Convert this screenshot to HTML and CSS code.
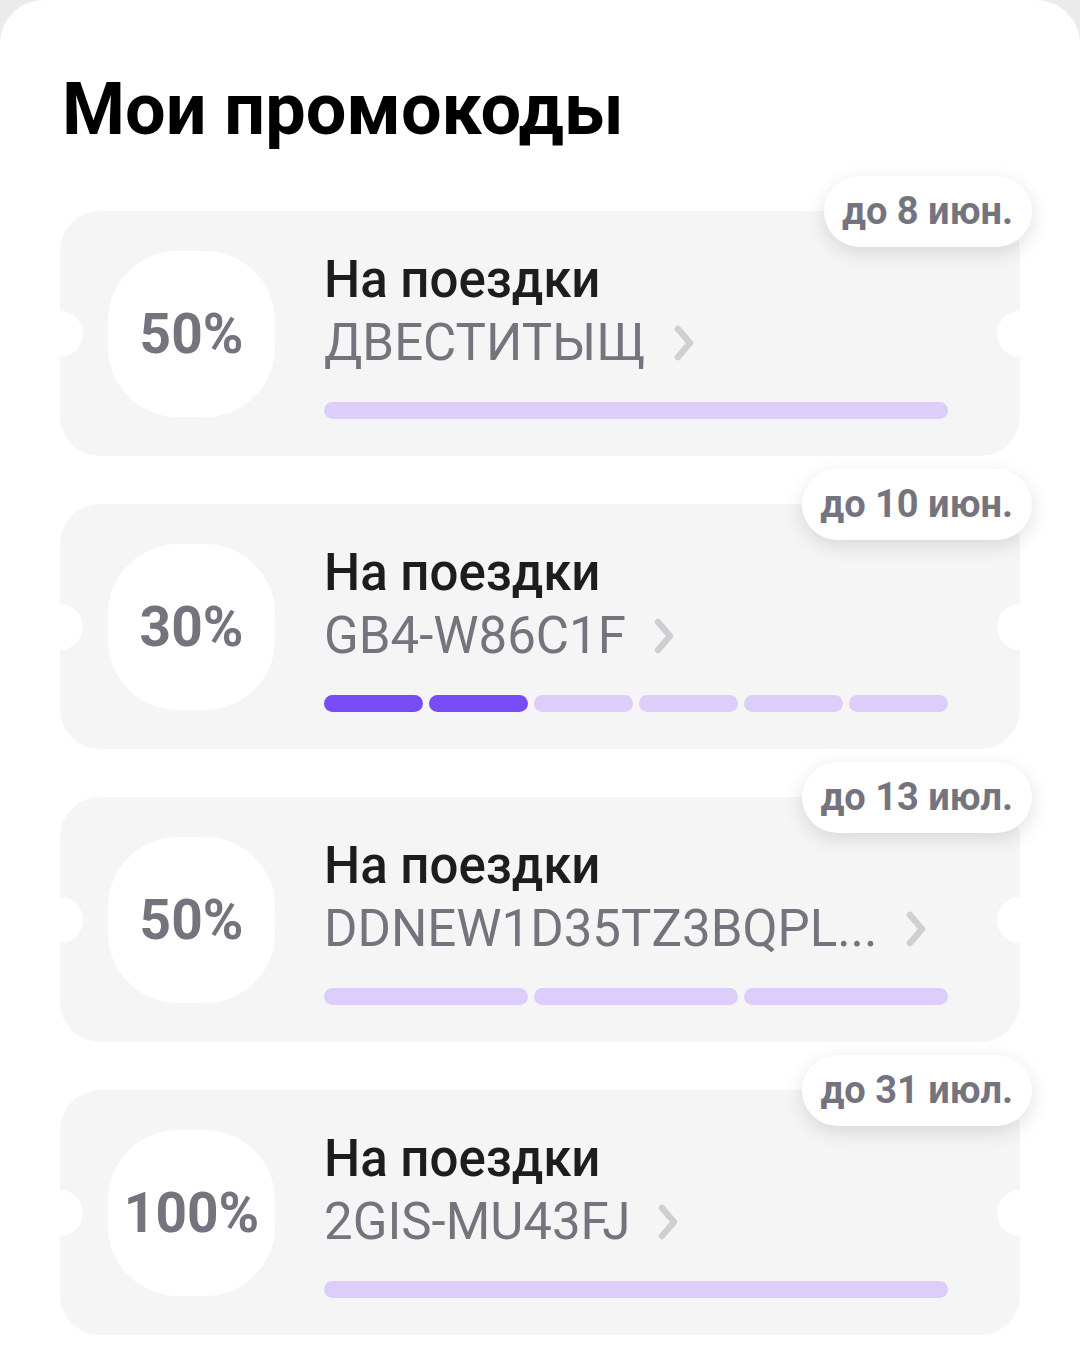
FILE: index.html
```html
<!DOCTYPE html>
<html lang="ru">

<head>
    <meta charset="UTF-8" />
    <meta name="viewport" content="width=device-width, initial-scale=1" />
    <title>Мои промокоды</title>
    <link rel="stylesheet" href="styles.css">
</head>

<body>
    <div class="sheet">
        <h1 class="sheet-title">Мои промокоды</h1>

        <div class="promo-list">

            <div class="promo">
                <span class="promo-date">до 8 июн.</span>
                <div class="promo-discount">50%</div>
                <div class="promo-info">
                    <div class="promo-title">На поездки</div>
                    <div class="promo-code">
                        <span class="promo-code-text">ДВЕСТИТЫЩ</span>
                        <svg class="chevron" viewBox="0 0 20 36"><path d="M4 4 L16 18 L4 32" /></svg>
                    </div>
                    <div class="progress">
                        <span class="seg"></span>
                    </div>
                </div>
            </div>

            <div class="promo">
                <span class="promo-date">до 10 июн.</span>
                <div class="promo-discount">30%</div>
                <div class="promo-info">
                    <div class="promo-title">На поездки</div>
                    <div class="promo-code">
                        <span class="promo-code-text">GB4-W86C1F</span>
                        <svg class="chevron" viewBox="0 0 20 36"><path d="M4 4 L16 18 L4 32" /></svg>
                    </div>
                    <div class="progress">
                        <span class="seg done"></span>
                        <span class="seg done"></span>
                        <span class="seg"></span>
                        <span class="seg"></span>
                        <span class="seg"></span>
                        <span class="seg"></span>
                    </div>
                </div>
            </div>

            <div class="promo">
                <span class="promo-date">до 13 июл.</span>
                <div class="promo-discount">50%</div>
                <div class="promo-info">
                    <div class="promo-title">На поездки</div>
                    <div class="promo-code">
                        <span class="promo-code-text">DDNEW1D35TZ3BQPL...</span>
                        <svg class="chevron" viewBox="0 0 20 36"><path d="M4 4 L16 18 L4 32" /></svg>
                    </div>
                    <div class="progress">
                        <span class="seg"></span>
                        <span class="seg"></span>
                        <span class="seg"></span>
                    </div>
                </div>
            </div>

            <div class="promo">
                <span class="promo-date">до 31 июл.</span>
                <div class="promo-discount">100%</div>
                <div class="promo-info">
                    <div class="promo-title">На поездки</div>
                    <div class="promo-code">
                        <span class="promo-code-text">2GIS-MU43FJ</span>
                        <svg class="chevron" viewBox="0 0 20 36"><path d="M4 4 L16 18 L4 32" /></svg>
                    </div>
                    <div class="progress">
                        <span class="seg"></span>
                    </div>
                </div>
            </div>

        </div>
    </div>
</body>

</html>
```

FILE: styles.css
```css
:root {
    /* Surfaces */
    --page-bg: #ebebeb;
    --sheet-bg: #ffffff;
    --card-bg: #f5f5f5;

    /* Text */
    --text-main: #000000;
    --text-title: #1d1d1f;
    --text-muted: #75747e;
    --chevron: #cfcfd3;

    /* Progress */
    --seg-idle: #dccdfb;
    --seg-done: #784cf5;
}

body {
    margin: 0;
    background: var(--page-bg);
    font-family: Roboto, "Noto Sans", sans-serif;
}

.sheet {
    min-height: 100vh;
    box-sizing: border-box;
    padding: 74px 60px 0;
    background: var(--sheet-bg);
    border-radius: 44px 44px 0 0;
}

.sheet-title {
    margin: 0 0 65px 2px;
    font-size: 72px;
    line-height: 1;
    font-weight: 700;
    color: var(--text-main);
}

.promo-list {
    display: flex;
    flex-direction: column;
    gap: 48px;
}

/* ——— ticket card ——— */
.promo {
    position: relative;
    display: flex;
    align-items: center;
    padding: 37px 72px 37px 48px;
    background: var(--card-bg);
    border-radius: 40px;
}

/* side notches */
.promo::before,
.promo::after {
    content: '';
    position: absolute;
    top: calc(50% - 23px);
    width: 46px;
    height: 46px;
    border-radius: 50%;
    background: var(--sheet-bg);
}

.promo::before {
    left: -23px;
}

.promo::after {
    right: -23px;
}

.promo-date {
    position: absolute;
    top: -35px;
    right: -12px;
    z-index: 1;
    height: 71px;
    padding: 0 19px 0 18px;
    line-height: 71px;
    font-size: 38px;
    font-weight: 700;
    color: var(--text-muted);
    background: #fff;
    border-radius: 36px;
    box-shadow: 0 6px 20px rgba(0, 0, 0, 0.12);
}

.promo-discount {
    flex: none;
    display: flex;
    align-items: center;
    justify-content: center;
    width: 167px;
    height: 166px;
    margin-right: 49px;
    background: #fff;
    border-radius: 42%;
    font-size: 55px;
    font-weight: 700;
    color: var(--text-muted);
}

.promo-info {
    flex: 1;
    min-width: 0;
}

.promo-title {
    font-size: 51px;
    line-height: 63px;
    font-weight: 500;
    color: var(--text-title);
}

.promo-code {
    display: flex;
    align-items: center;
    gap: 28px;
    font-size: 51px;
    line-height: 63px;
    color: var(--text-muted);
    white-space: nowrap;
}

.chevron {
    flex: none;
    width: 20px;
    height: 36px;
}

.chevron path {
    fill: none;
    stroke: var(--chevron);
    stroke-width: 6.5;
    stroke-linecap: round;
    stroke-linejoin: round;
}

.progress {
    display: flex;
    gap: 6px;
    margin-top: 28px;
}

.seg {
    flex: 1;
    height: 17px;
    border-radius: 9px;
    background: var(--seg-idle);
}

.seg.done {
    background: var(--seg-done);
}
```
